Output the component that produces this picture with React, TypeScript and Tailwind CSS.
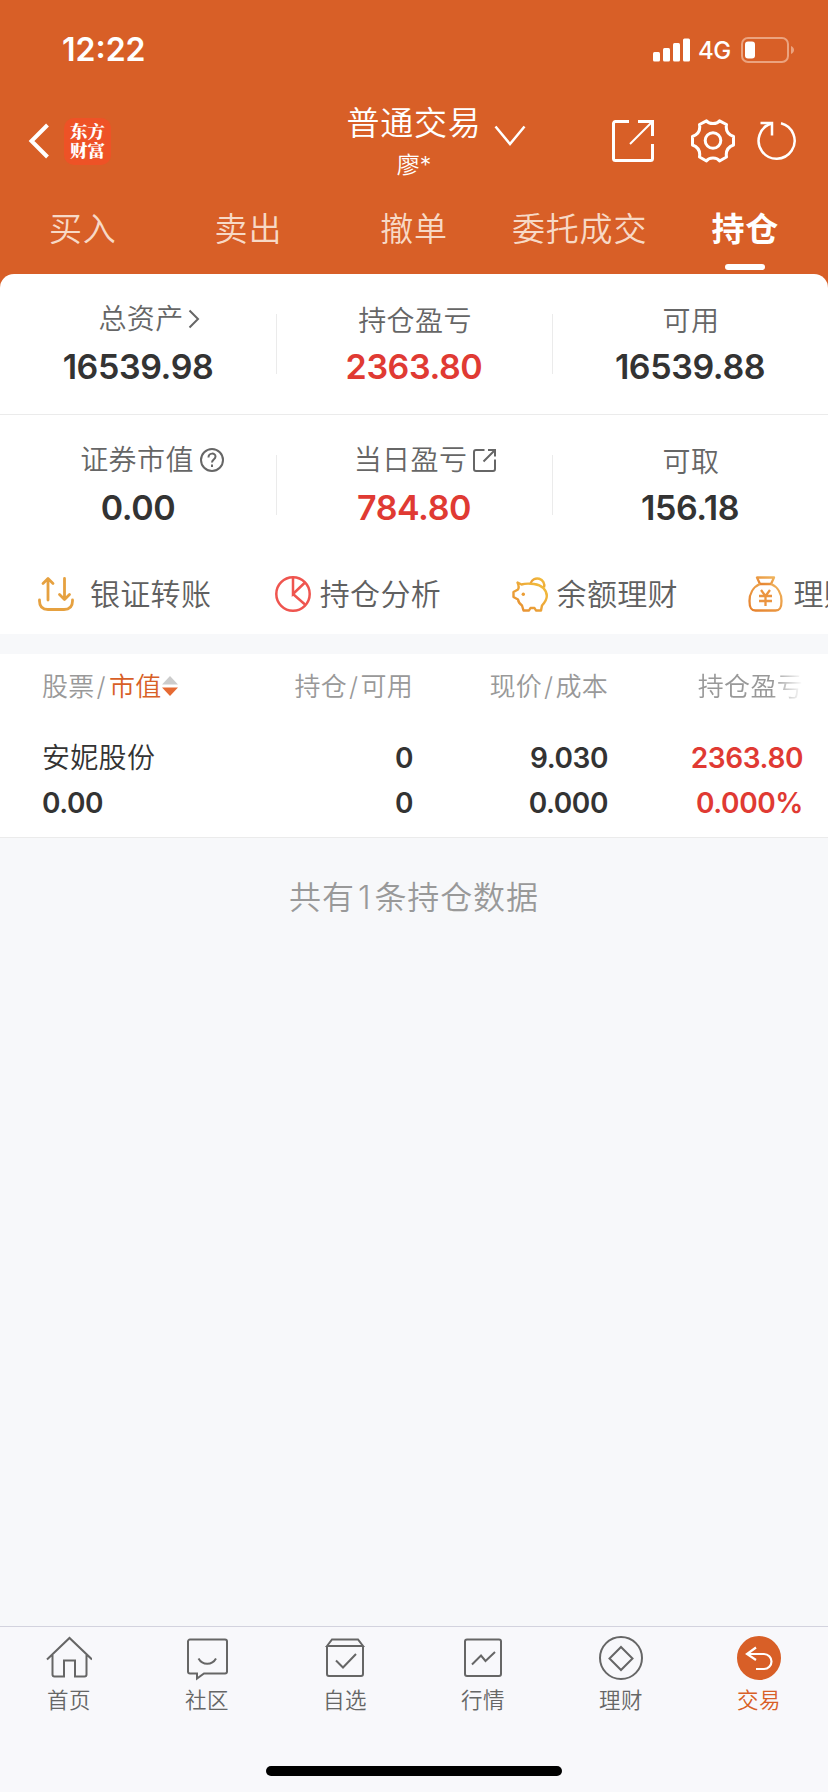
import React from 'react';

const tabs = ['买入', '卖出', '撤单', '委托成交', '持仓'];

const App: React.FC = () => (
  <div className="flex h-[1792px] w-[828px] flex-col overflow-hidden bg-[#f7f8fa] font-['Inter','Noto_Sans_CJK_SC',sans-serif] text-[#333]">
    <div className="bg-[#d85f27] text-white">
      <StatusBar />
      <Header />
      <nav className="grid h-[91px] grid-cols-5">
        {tabs.map(tab => (
          <div
            key={tab}
            className={`relative flex items-center justify-center pt-[3px] text-[33px] tracking-[0.8px] ${
              tab === '持仓' ? 'font-bold text-white' : 'font-[350] text-[#f7d9c6]'
            }`}
          >
            {tab}
            {tab === '持仓' && <span className="absolute bottom-1 h-1.5 w-10 rounded-full bg-white" />}
          </div>
        ))}
      </nav>
    </div>

    <div className="bg-[#d85f27]">
      <section className="rounded-t-[14px] bg-white">
        <div className="grid h-[141px] grid-cols-3 border-b border-[#ebebeb]">
          <Stat label="总资产" value="16539.98" icon={<ArrowIcon />} />
          <Stat label="持仓盈亏" value="2363.80" red />
          <Stat label="可用" value="16539.88" last />
        </div>
        <div className="grid h-[139px] grid-cols-3">
          <Stat label="证券市值" value="0.00" icon={<HelpIcon />} />
          <Stat label="当日盈亏" value="784.80" icon={<ShareIcon />} red />
          <Stat label="可取" value="156.18" last />
        </div>
        <div className="flex h-20 w-[828px] overflow-hidden">
          <Action label="银证转账" icon={<TransferIcon />} />
          <Action label="持仓分析" icon={<PieIcon />} />
          <Action label="余额理财" icon={<PiggyIcon />} />
          <Action label="理财" icon={<BagIcon />} />
        </div>
      </section>
    </div>

    <section className="mt-5 h-[184px] border-b border-[#ebebeb] bg-white pl-[42px]">
      <div className="grid h-16 grid-cols-[176px_195px_195px_195px] items-center whitespace-nowrap text-right text-[26px] font-[350] tracking-[0.3px] text-[#999]">
        <div className="flex items-center">
          <span>股票<Slash /></span>
          <span className="ml-px text-[#d85f27]">市值</span>
          <svg className="h-5 w-4" viewBox="0 0 16 20">
            <path d="M8 0l8 8.500H0z" fill="#ccc" />
            <path d="M8 20l8-8.500H0z" fill="#e66a33" />
          </svg>
        </div>
        <span>持仓<Slash />可用</span>
        <span>现价<Slash />成本</span>
        <span className="[mask-image:linear-gradient(to_right,black_84%,transparent_100%)]">持仓盈亏</span>
      </div>
      <div className="grid grid-cols-[176px_195px_195px_195px] pt-[18px] text-right text-[28px] font-semibold leading-[45px] tracking-[-0.4px]">
        <span className="text-left font-[350] tracking-[0.3px]">安妮股份</span>
        <span>0</span>
        <span>9.030</span>
        <span className="text-[#e03a33]">2363.80</span>
        <span className="text-left">0.00</span>
        <span>0</span>
        <span>0.000</span>
        <span className="text-[#e03a33]">0.000%</span>
      </div>
    </section>

    <p className="mt-[34px] text-center text-[32px] font-[350] leading-[52px] tracking-[0.9px] text-[#999]">
      共有<span className="px-[3px]">1</span>条持仓数据
    </p>

    <BottomBar />
  </div>
);

const Slash = () => <span className="px-0.5">/</span>;

const StatusBar = () => (
  <div className="flex h-[99px] items-center pl-[62px] pr-[34px]">
    <span className="text-[32px] font-semibold">12:22</span>
    <svg className="ml-auto h-6 w-[37px]" viewBox="0 0 37 24" fill="white">
      <rect y="14" width="7" height="9.500" rx="1.500" />
      <rect x="10" y="10" width="7" height="13.500" rx="1.500" />
      <rect x="20" y="5" width="7" height="18.500" rx="1.500" />
      <rect x="30" y="0.500" width="7" height="23" rx="1.500" />
    </svg>
    <span className="ml-2 w-[35px] pt-0.5 text-[24px] font-medium tracking-[-0.5px]">4G</span>
    <svg className="ml-2 h-[26px] w-[53px]" viewBox="0 0 53 26" fill="none">
      <rect x="1" y="1" width="46" height="24" rx="6" stroke="#eba37f" strokeWidth="2" />
      <rect x="4" y="4.500" width="10" height="17" rx="3" fill="white" />
      <path d="M50 9c4 1.500 4 6.500 0 8z" fill="#eba37f" />
    </svg>
  </div>
);

const Header = () => (
  <div className="grid h-[84px] grid-cols-[1fr_auto_1fr]">
    <div className="flex items-center pl-7">
      <svg className="h-9 w-[22px]" viewBox="0 0 22 36" fill="none" stroke="white" strokeWidth="4">
        <path d="M19.500 2L3.500 18l16 16" />
      </svg>
      <div className="ml-3.5 flex h-[47px] w-[47px] flex-col items-center justify-center rounded-[10px] bg-[#ee5226] pb-0.5 font-['Noto_Serif_CJK_SC','Noto_Sans_CJK_SC',serif] text-[17.500px] font-black leading-[19px]">
        <span>东方</span>
        <span>财富</span>
      </div>
    </div>
    <div className="text-center">
      <div className="text-[33px] font-[350] leading-[48px] tracking-[0.8px]">普通交易</div>
      <div className="text-[23px] font-[350] leading-9">廖*</div>
    </div>
    <div className="flex items-center pl-3 pr-[31px]">
      <svg className="mb-[10px] h-[22px] w-8" viewBox="0 0 32 22" fill="none" stroke="white" strokeWidth="2.500">
        <path d="M1.500 1.500L16 19 30.500 1.500" />
      </svg>
      <svg className="ml-auto h-11 w-11" viewBox="0 0 44 44" fill="none" stroke="white" strokeWidth="3">
        <path d="M18 2.500H4.500a2 2 0 0 0-2 2v35a2 2 0 0 0 2 2h35a2 2 0 0 0 2-2V25" />
        <path d="M27 2.500h14.500V17" />
        <path d="M41 3L19 25" strokeWidth="2" />
      </svg>
      <svg className="ml-9 h-11 w-11" viewBox="0 0 44 44" fill="none" stroke="white" strokeWidth="3" strokeLinejoin="round">
        <path d="M15.500 1.800C18 5.500 26 5.500 28.500 1.800L35.500 5.500C34.500 11 37 15.500 42.500 17.500V26C37 28 34.500 32 35.500 38L28.500 42C26 38 18 38 15.500 42L8.500 38C9.500 32 7 28 1.500 26V17.500C7 15.500 9.500 11 8.500 5.500z" />
        <circle cx="22" cy="21.500" r="7.800" />
      </svg>
      <svg className="ml-[22px] h-10 w-10" viewBox="0 0 40 40" fill="none" stroke="white" strokeWidth="2.500">
        <path d="M24 2.300A18 18 0 1 1 14.500 2.500" />
        <path d="M3.500 2H15V14.500" />
      </svg>
    </div>
  </div>
);

interface StatProps {
  label: string;
  value: string;
  icon?: React.ReactNode;
  red?: boolean;
  last?: boolean;
}

const Stat = ({ label, value, icon, red, last }: StatProps) => (
  <div className="flex items-center">
    <div className="flex-1 pt-0.5 text-center">
      <div className={`flex h-10 items-center justify-center text-[28px] font-[350] tracking-[0.4px] text-[#666] ${icon ? 'pl-[22px]' : 'pl-0.5 pt-1'}`}>
        {label}
        {icon}
      </div>
      <div className={`pt-1 text-[34px] font-semibold leading-[48px] tracking-[-0.4px] ${red ? 'text-[#e03a33]' : ''}`}>{value}</div>
    </div>
    {!last && <div className="-mr-px h-[60px] w-px bg-[#ebebeb]" />}
  </div>
);

const ArrowIcon = () => (
  <svg className="ml-1 h-5 w-3" viewBox="0 0 12 20" fill="none" stroke="#666" strokeWidth="2">
    <path d="M1.500 1.500L10 10l-8.500 8.500" />
  </svg>
);

const HelpIcon = () => (
  <svg className="-mr-1.5 ml-1.5 h-6 w-6" viewBox="0 0 24 24" fill="none" stroke="#666" strokeWidth="2">
    <circle cx="12" cy="12" r="11" />
    <path d="M8.500 9.500c0-5 7-5 7-1 0 3-3.500 3-3.500 6M12 16.500V19" />
  </svg>
);

const ShareIcon = () => (
  <svg className="ml-[5px] h-6 w-6" viewBox="0 0 24 24" fill="none" stroke="#666" strokeWidth="2">
    <path d="M12.500 2H4a2 2 0 0 0-2 2v17a2 2 0 0 0 2 2h17a2 2 0 0 0 2-2V11.500" />
    <path d="M16 2h7v6.500M23 2L11.500 13.500" />
  </svg>
);

const Action = ({ label, icon }: { label: string; icon: React.ReactNode }) => (
  <div className="flex w-[236.800px] shrink-0 items-center whitespace-nowrap pl-[38px] text-[30px] font-[350] tracking-[0.3px] text-[#606060]">
    {icon}
    <span className={label === '银证转账' ? 'ml-4' : 'ml-[9px]'}>{label}</span>
  </div>
);

const TransferIcon = () => (
  <svg className="h-9 w-9" viewBox="0 0 36 36" fill="none" stroke="#e6a140" strokeWidth="2.800" strokeLinecap="round" strokeLinejoin="round">
    <path d="M10 24V3M5 7.500l5-5 5 5M26.500 2.500V23M21.500 18.500l5 5 5-5" />
    <path d="M1.500 24v1q0 8.500 8.500 8.500h16q8.500 0 8.500-8.500v-1" />
  </svg>
);

const PieIcon = () => (
  <svg className="h-9 w-9" viewBox="0 0 36 36" fill="none" stroke="#ef554f" strokeWidth="2.500">
    <circle cx="18" cy="18" r="16.700" />
    <path d="M18 1.500V18L30 6.500M18 18l12 10.500" />
  </svg>
);

const PiggyIcon = () => (
  <svg className="h-9 w-9" viewBox="0 0 36 36" fill="none" strokeWidth="2.400" strokeLinejoin="round">
    <defs>
      <linearGradient id="piggy" x1="1" y1="0" x2="0" y2="1">
        <stop offset="0" stopColor="#f3c13d" />
        <stop offset="1" stopColor="#e68c33" />
      </linearGradient>
    </defs>
    <g stroke="url(#piggy)">
      <path d="M18.500 7.500a7 7 0 1 1 13.500 4" />
      <path d="M5.500 6.500L9.500 8.500Q14 7 22 8C30 9 34.800 14 34.800 20c0 4-2.500 7-4.800 9.500L29 34.500h-5L22.500 32h-4L17 34.500h-5.500L10 29.500Q6.500 27 6 23.500L1.500 21V16l4.500-2.500Q7.500 11 5.500 6.500z" />
    </g>
    <circle cx="11.300" cy="18.300" r="1.700" fill="#eb9d34" />
  </svg>
);

const BagIcon = () => (
  <svg className="h-9 w-9" viewBox="0 0 36 36" fill="none" strokeWidth="2.300" strokeLinejoin="round">
    <defs>
      <linearGradient id="bag" x1="1" y1="0" x2="0" y2="1">
        <stop offset="0" stopColor="#efb35c" />
        <stop offset="1" stopColor="#e6802c" />
      </linearGradient>
    </defs>
    <g stroke="url(#bag)">
      <path d="M9 1.500h17l-3 6.500H12z" />
      <path d="M12 8C5 11 1.500 18 1.500 25c0 6 1 9.500 6 9.500h20c5 0 6-3.500 6-9.500 0-7-3.500-14-10.500-17" />
    </g>
    <path d="M13 14l4.500 6 4.500-6M11 20h13M11 25h13M17.500 20v10" stroke="#eb9440" />
  </svg>
);

const NavItem = ({ label, active, children }: { label: string; active?: boolean; children: React.ReactNode }) => (
  <div className={`flex flex-col items-center pt-2 text-[21.500px] font-[350] leading-[30px] tracking-[0.5px] ${active ? 'text-[#d85f27]' : 'text-[#666]'}`}>
    <svg className="mb-1 h-[46px] w-[46px]" viewBox="0 0 46 46" fill="none" stroke="currentColor" strokeWidth="2">
      {children}
    </svg>
    {label}
  </div>
);

const BottomBar = () => (
  <footer className="mt-auto flex h-[166px] flex-col border-t border-[#d3d3de] bg-[#f8f8fb]">
    <div className="grid grid-cols-6">
      <NavItem label="首页">
        <path d="M1 24.500L23.500 3 46 24.500M6.500 20v19.500a2 2 0 0 0 2 2H18v-16h11v16h9.500a2 2 0 0 0 2-2V20" />
      </NavItem>
      <NavItem label="社区">
        <path d="M6 4.500h35a2 2 0 0 1 2 2v30a2 2 0 0 1-2 2H20l-7 5v-5H6a2 2 0 0 1-2-2v-30a2 2 0 0 1 2-2z" />
        <path d="M14.500 23.500c4 7 13.500 7 17.500 0" />
      </NavItem>
      <NavItem label="自选">
        <path d="M5 11v28a2 2 0 0 0 2 2h32a2 2 0 0 0 2-2V11M5 11l5-6.500h26l5 6.500zM14 25.500l7 7 13-13.500" />
      </NavItem>
      <NavItem label="行情">
        <rect x="5" y="4.500" width="36" height="36.500" rx="2" />
        <path d="M12 29.500l9-9 4.500 5.500L35 17" />
      </NavItem>
      <NavItem label="理财">
        <circle cx="23" cy="23" r="21" />
        <path d="M23 12l11.500 11.500L23 35 11.500 23.500z" />
      </NavItem>
      <NavItem label="交易" active>
        <circle cx="23" cy="23" r="21" fill="currentColor" />
        <path d="M20 12.500L11 19l9 6M11 19h17a7.500 7.500 0 0 1 0 15h-8" stroke="white" strokeWidth="2.200" />
      </NavItem>
    </div>
    <div className="mx-auto mb-4 mt-auto h-2.5 w-[296px] rounded-full bg-black" />
  </footer>
);

export default App;
